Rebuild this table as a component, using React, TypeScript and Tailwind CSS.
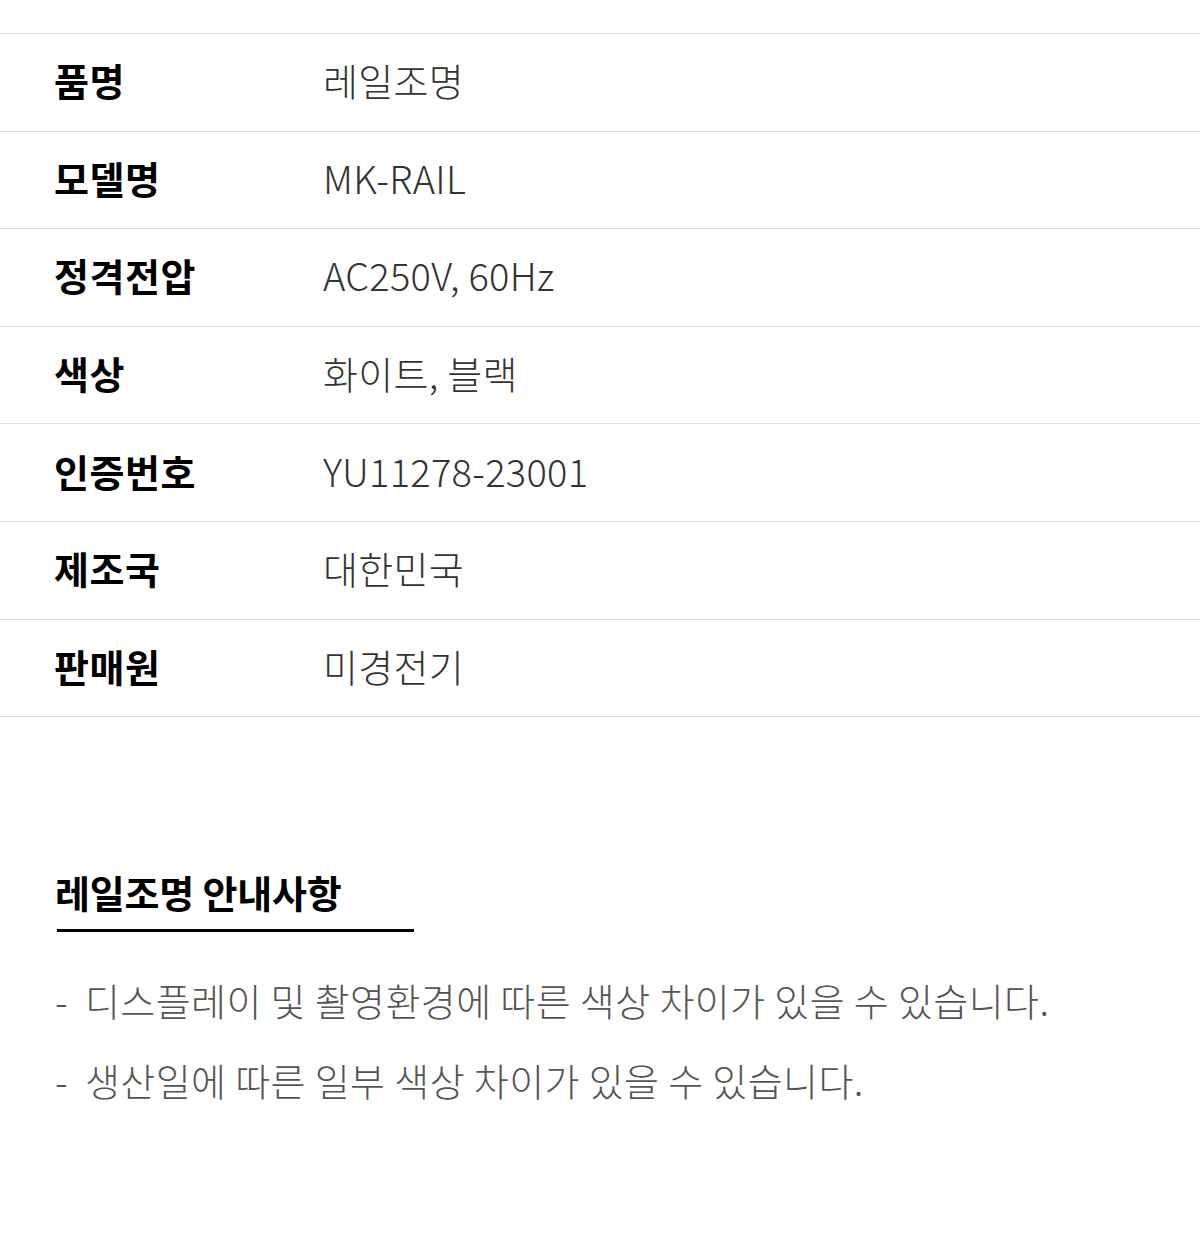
const specs = [
  { label: '품명', value: '레일조명' },
  { label: '모델명', value: 'MK-RAIL' },
  { label: '정격전압', value: 'AC250V, 60Hz' },
  { label: '색상', value: '화이트, 블랙' },
  { label: '인증번호', value: 'YU11278-23001' },
  { label: '제조국', value: '대한민국' },
  { label: '판매원', value: '미경전기' },
]

const notes = [
  '디스플레이 및 촬영환경에 따른 색상 차이가 있을 수 있습니다.',
  '생산일에 따른 일부 색상 차이가 있을 수 있습니다.',
]

export default function App() {
  return (
    <div
      className="w-[1200px] h-[1250px] bg-white pt-[33px]"
      style={{ fontFamily: '"Noto Sans CJK KR", "Noto Sans", sans-serif' }}
    >
      <table className="w-full border-collapse border-t border-[#dddddd]">
        <tbody>
          {specs.map((row) => (
            <tr key={row.label} className="h-[97.6px] border-b border-[#dddddd]">
              <th className="w-[323px] pl-[54px] pb-[4px] text-left align-middle text-[38px] font-bold leading-[52px] tracking-[0.5px] text-black">
                {row.label}
              </th>
              <td className="pb-[4px] align-middle text-[38px] font-light leading-[52px] tracking-[0.3px] text-[#333333]">
                {row.value}
              </td>
            </tr>
          ))}
        </tbody>
      </table>

      <section className="pl-[55px] pt-[149px]">
        <h2 className="text-[38px] font-bold leading-[52px] tracking-[-0.2px] text-black">
          레일조명 안내사항
        </h2>
        <div className="ml-[2px] mt-[11px] h-[3px] w-[357px] bg-black" />
        <ul className="mt-[42px] space-y-[28px]">
          {notes.map((note) => (
            <li key={note} className="flex text-[38px] font-light leading-[52px] tracking-[0.4px] text-[#555555]">
              <span className="w-[30px] shrink-0">-</span>
              <span>{note}</span>
            </li>
          ))}
        </ul>
      </section>
    </div>
  )
}
